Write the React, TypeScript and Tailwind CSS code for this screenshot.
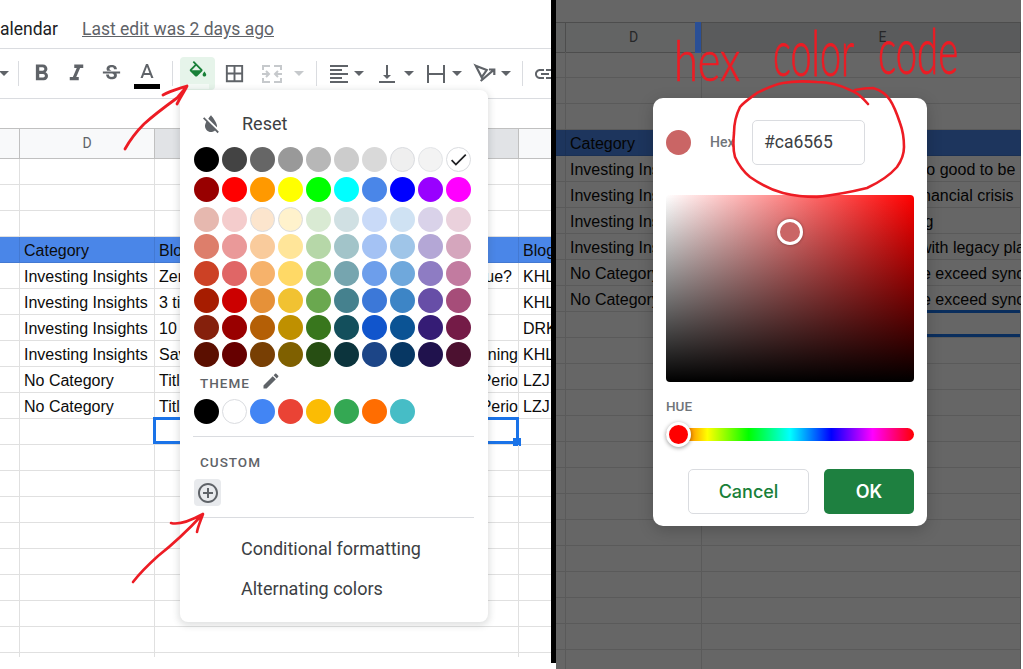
import type { ReactNode } from 'react'

const swatchRows = [
  ['bg-[#000000]', 'bg-[#434343]', 'bg-[#666666]', 'bg-[#999999]', 'bg-[#b7b7b7]', 'bg-[#cccccc]', 'bg-[#d9d9d9]', 'bg-[#efefef] border border-[#dadce0]', 'bg-[#f3f3f3] border border-[#e3e5e8]', 'bg-white border border-[#dadce0]'],
  ['bg-[#980000]', 'bg-[#ff0000]', 'bg-[#ff9900]', 'bg-[#ffff00]', 'bg-[#00ff00]', 'bg-[#00ffff]', 'bg-[#4a86e8]', 'bg-[#0000ff]', 'bg-[#9900ff]', 'bg-[#ff00ff]'],
  ['bg-[#e6b8af]', 'bg-[#f4cccc]', 'bg-[#fce5cd] border border-[#dadce0]', 'bg-[#fff2cc] border border-[#dadce0]', 'bg-[#d9ead3]', 'bg-[#d0e0e3]', 'bg-[#c9daf8]', 'bg-[#cfe2f3]', 'bg-[#d9d2e9]', 'bg-[#ead1dc]'],
  ['bg-[#dd7e6b]', 'bg-[#ea9999]', 'bg-[#f9cb9c]', 'bg-[#ffe599]', 'bg-[#b6d7a8]', 'bg-[#a2c4c9]', 'bg-[#a4c2f4]', 'bg-[#9fc5e8]', 'bg-[#b4a7d6]', 'bg-[#d5a6bd]'],
  ['bg-[#cc4125]', 'bg-[#e06666]', 'bg-[#f6b26b]', 'bg-[#ffd966]', 'bg-[#93c47d]', 'bg-[#76a5af]', 'bg-[#6d9eeb]', 'bg-[#6fa8dc]', 'bg-[#8e7cc3]', 'bg-[#c27ba0]'],
  ['bg-[#a61c00]', 'bg-[#cc0000]', 'bg-[#e69138]', 'bg-[#f1c232]', 'bg-[#6aa84f]', 'bg-[#45818e]', 'bg-[#3c78d8]', 'bg-[#3d85c6]', 'bg-[#674ea7]', 'bg-[#a64d79]'],
  ['bg-[#85200c]', 'bg-[#990000]', 'bg-[#b45f06]', 'bg-[#bf9000]', 'bg-[#38761d]', 'bg-[#134f5c]', 'bg-[#1155cc]', 'bg-[#0b5394]', 'bg-[#351c75]', 'bg-[#741b47]'],
  ['bg-[#5b0f00]', 'bg-[#660000]', 'bg-[#783f04]', 'bg-[#7f6000]', 'bg-[#274e13]', 'bg-[#0c343d]', 'bg-[#1c4587]', 'bg-[#073763]', 'bg-[#20124d]', 'bg-[#4c1130]'],
]
const rowGaps = ['mt-[12px]', 'mt-[5px]', 'mt-[5px]', 'mt-[2px]', 'mt-[2px]', 'mt-[2px]', 'mt-[2px]', 'mt-[2px]']
const themeSwatches = ['bg-[#000000]', 'bg-white border border-[#dadce0]', 'bg-[#4285f4]', 'bg-[#ea4335]', 'bg-[#fbbc04]', 'bg-[#34a853]', 'bg-[#ff6d01]', 'bg-[#46bdc6]']

const sheetRows = [
  { cat: 'Investing Insights', title: 'Zero', tail: 'ue?', tailCls: 'pr-[6px]', owner: 'KHL', rest: 'too good to be', restCls: 'pl-[211px]' },
  { cat: 'Investing Insights', title: '3 tips', tail: '', tailCls: '', owner: 'KHL', rest: 'financial crisis', restCls: 'pl-[212px]' },
  { cat: 'Investing Insights', title: '10 ways', tail: '', tailCls: '', owner: 'DRK', rest: 'ing', restCls: 'pl-[210px]' },
  { cat: 'Investing Insights', title: 'Saving', tail: 'ning', tailCls: 'pr-0', owner: 'KHL', rest: 'with legacy planning', restCls: 'pl-[218px]' },
  { cat: 'No Category', title: 'Title', tail: 'Perio', tailCls: 'pr-0', owner: 'LZJ', rest: 'e exceed synchronization', restCls: 'pl-[220px]' },
  { cat: 'No Category', title: 'Title', tail: 'Perio', tailCls: 'pr-0', owner: 'LZJ', rest: 'e exceed synchronization', restCls: 'pl-[220px]' },
]

function Icon({ d, className }: { d: string; className: string }) {
  return (
    <svg viewBox="0 0 24 24" fill="currentColor" className={className}>
      <path d={d} />
    </svg>
  )
}

function Caret({ className = 'text-[#5f6368]' }: { className?: string }) {
  return (
    <svg viewBox="0 0 10 5" fill="currentColor" className={`w-[10px] h-[5px] ${className}`}>
      <path d="M0 0h10L5 5z" />
    </svg>
  )
}

function Sep({ className }: { className: string }) {
  return <div className={`w-px h-[25px] shrink-0 bg-[#dadce0] ${className}`} />
}

function ToolBox({ className, children }: { className: string; children: ReactNode }) {
  return <div className={`flex items-center justify-center shrink-0 text-[#5f6368] ${className}`}>{children}</div>
}

function Toolbar() {
  return (
    <div className="flex items-center h-[50px] border-b border-[#dadce0] overflow-hidden">
      <div className="w-[18px] shrink-0 -ml-[1px]"><Caret /></div>
      <Sep className="ml-[1px]" />
      <ToolBox className="w-[34px] ml-[5px]">
        <Icon className="size-[27px]" d="M15.6 10.79c.97-.67 1.65-1.77 1.65-2.79 0-2.26-1.75-4-4-4H7v14h7.04c2.09 0 3.71-1.7 3.71-3.79 0-1.52-.86-2.82-2.15-3.42zM10 6.5h3c.83 0 1.5.67 1.5 1.5s-.67 1.5-1.5 1.5h-3v-3zm3.5 9H10v-3h3.5c.83 0 1.5.67 1.5 1.5s-.67 1.5-1.5 1.5z" />
      </ToolBox>
      <ToolBox className="w-[36px]">
        <Icon className="size-[27px]" d="M10 4v3h2.21l-3.42 8H6v3h8v-3h-2.21l3.42-8H18V4z" />
      </ToolBox>
      <ToolBox className="w-[35px]">
        <Icon className="size-[23px]" d="M7.24 8.75c-.26-.48-.39-1.03-.39-1.67 0-.61.13-1.16.4-1.67.26-.5.63-.93 1.11-1.29.48-.35 1.05-.63 1.7-.83.66-.19 1.39-.29 2.18-.29.81 0 1.54.11 2.21.34.66.22 1.23.54 1.69.94.47.4.83.88 1.08 1.43.25.55.38 1.15.38 1.81h-3.01c0-.31-.05-.59-.15-.85-.09-.27-.24-.49-.44-.68-.2-.19-.45-.33-.75-.44-.3-.1-.66-.16-1.06-.16-.39 0-.74.04-1.03.13-.29.09-.53.21-.72.36-.19.16-.34.34-.44.55-.1.21-.15.43-.15.66 0 .48.25.88.74 1.21.38.25.77.48 1.41.7H7.39c-.05-.08-.11-.17-.15-.25zM21 12v-2H3v2h9.62c.18.07.4.14.55.2.37.17.66.34.87.51.21.17.35.36.43.57.07.2.11.43.11.69 0 .23-.05.45-.14.66-.09.2-.23.38-.42.53-.19.15-.42.26-.71.35-.29.08-.63.13-1.01.13-.43 0-.83-.04-1.18-.13s-.66-.23-.91-.42c-.25-.19-.45-.44-.59-.75-.14-.31-.25-.76-.25-1.21H6.4c0 .55.08 1.13.24 1.58.16.45.37.85.65 1.21.28.35.6.66.98.92.37.26.78.48 1.22.65.44.17.9.3 1.38.39.48.08.96.13 1.44.13.8 0 1.53-.09 2.18-.28s1.21-.45 1.67-.79c.46-.34.82-.77 1.07-1.27s.38-1.07.38-1.71c0-.6-.1-1.14-.31-1.61-.05-.11-.11-.23-.17-.33H21z" />
      </ToolBox>
      <ToolBox className="w-[36px] flex-col mt-[3px]">
        <Icon className="size-[24px]" d="M11 3L5.5 17h2.25l1.12-3h6.25l1.12 3h2.25L13 3h-2zm-1.38 9L12 5.67 14.38 12H9.62z" />
        <div className="w-[26px] h-[5px] -mt-[1px] bg-black" />
      </ToolBox>
      <Sep className="ml-[7px]" />
      <div className="flex flex-col items-center w-[35px] h-[33px] ml-[7px] shrink-0 rounded-[4px] bg-[#e6f4ea] text-[#188038]">
        <Icon className="size-[22px] mt-[4px] shrink-0" d="M16.56 8.94L7.62 0 6.21 1.41l2.38 2.38-5.15 5.15c-.59.59-.59 1.54 0 2.12l5.5 5.5c.29.29.68.44 1.06.44s.77-.15 1.06-.44l5.5-5.5c.59-.58.59-1.53 0-2.12zM5.21 10L10 5.21 14.79 10H5.21zM19 11.5s-2 2.17-2 3.5c0 1.1.9 2 2 2s2-.9 2-2c0-1.33-2-3.5-2-3.5z" />
        <div className="w-[23px] h-[5px] mt-px bg-[#f4faf6]" />
      </div>
      <ToolBox className="w-[38px]">
        <Icon className="size-[23px]" d="M3 3v18h18V3H3zm8 16H5v-6h6v6zm0-8H5V5h6v6zm8 8h-6v-6h6v6zm0-8h-6V5h6v6z" />
      </ToolBox>
      <ToolBox className="w-[38px]">
        <svg viewBox="0 0 24 24" fill="none" stroke="#c6c9cc" strokeWidth="2" className="size-[24px]">
          <path d="M3 8V4h7M14 4h7v4M3 16v4h7M14 20h7v-4M2 12h6M6 9l3 3-3 3M22 12h-6M18 9l-3 3 3 3" />
        </svg>
      </ToolBox>
      <ToolBox className="w-[16px]"><Caret className="text-[#c6c9cc]" /></ToolBox>
      <Sep className="ml-[9px]" />
      <ToolBox className="w-[28px] ml-[8px]">
        <Icon className="size-[24px]" d="M15 15H3v2h12v-2zm0-8H3v2h12V7zM3 13h18v-2H3v2zm0 8h18v-2H3v2zM3 3v2h18V3H3z" />
      </ToolBox>
      <ToolBox className="w-[12px]"><Caret /></ToolBox>
      <ToolBox className="w-[28px] ml-[8px]">
        <Icon className="size-[24px]" d="M16 13h-3V3h-2v10H8l4 4 4-4zM4 19v2h16v-2H4z" />
      </ToolBox>
      <ToolBox className="w-[12px] ml-[2px]"><Caret /></ToolBox>
      <ToolBox className="w-[28px] ml-[7px]">
        <Icon className="size-[24px]" d="M3 3h2v18H3zM19 3h2v18h-2zM5 11h14v2H5z" />
      </ToolBox>
      <ToolBox className="w-[12px] ml-[1px]"><Caret /></ToolBox>
      <ToolBox className="w-[28px] ml-[7px]">
        <svg viewBox="0 0 28 28" fill="none" stroke="currentColor" strokeWidth="2.2" className="size-[28px]">
          <path d="M5.7 5.7L16.7 10 11.7 17.3zM10.7 21L24.3 9.3M19 9.5h5.3V15" />
        </svg>
      </ToolBox>
      <ToolBox className="w-[12px] ml-[2px]"><Caret /></ToolBox>
      <Sep className="ml-[10px]" />
      <ToolBox className="w-[28px] ml-[8px]">
        <Icon className="size-[24px]" d="M3.9 12c0-1.71 1.39-3.1 3.1-3.1h4V7H7c-2.76 0-5 2.24-5 5s2.24 5 5 5h4v-1.9H7c-1.71 0-3.1-1.39-3.1-3.1zM8 13h8v-2H8v2zm9-6h-4v1.9h4c1.71 0 3.1 1.39 3.1 3.1s-1.39 3.1-3.1 3.1h-4V17h4c2.76 0 5-2.24 5-5s-2.24-5-5-5z" />
      </ToolBox>
    </div>
  )
}

type Cols = { gutter: string; d: string; e: string; f: string }
const leftCols: Cols = { gutter: 'w-[20px]', d: 'w-[135px]', e: 'w-[364px]', f: 'flex-1' }
const rightCols: Cols = { gutter: 'w-[10px]', d: 'w-[136px]', e: 'flex-1', f: 'hidden' }

function HeaderRow({ cols, handle }: { cols: Cols; handle?: boolean }) {
  const cell = 'flex items-center justify-center shrink-0 border-r border-[#c0c0c0]'
  return (
    <div className="flex h-[31px] border-y border-[#c0c0c0] font-['Roboto',sans-serif] text-[14px] text-[#5f6368]">
      <div className={`${cols.gutter} shrink-0 border-r border-[#c0c0c0] bg-[#f8f9fa]`} />
      <div className={`${cols.d} ${cell} relative bg-[#f8f9fa]`}>
        D
        {handle && <div className="absolute right-0 -top-px -bottom-px w-[6px] z-20 bg-[#2a4f96]" />}
      </div>
      <div className={`${cols.e} ${cell} bg-[#e1e3e6] ${handle ? 'pl-[43px]' : ''}`}>{handle ? 'E' : ''}</div>
      <div className={`${cols.f} bg-[#f8f9fa]`} />
    </div>
  )
}

function GridRow({ cols, blue, d, e, f, selection }: { cols: Cols; blue?: boolean; d?: ReactNode; e?: ReactNode; f?: ReactNode; selection?: ReactNode }) {
  const tone = blue ? 'border-[#4379d2]' : 'border-[#e0e0e0]'
  return (
    <div className={`flex h-[26px] shrink-0 border-b ${tone} font-['Liberation_Sans',sans-serif] text-[16px] leading-[27px] text-[#0c0c0c] whitespace-nowrap ${blue ? 'bg-[#4a86e8]' : ''}`}>
      <div className={`${cols.gutter} shrink-0 border-r ${tone}`} />
      <div className={`${cols.d} shrink-0 pl-[4px] overflow-hidden border-r ${tone}`}>{d}</div>
      <div className={`${cols.e} relative shrink-0 border-r ${tone}`}>
        <div className="h-full overflow-hidden">{e}</div>
        {selection}
      </div>
      <div className={`${cols.f} pl-[4px] overflow-hidden`}>{f}</div>
    </div>
  )
}

function LeftSheet() {
  return (
    <div>
      <HeaderRow cols={leftCols} />
      <GridRow cols={leftCols} />
      <GridRow cols={leftCols} />
      <GridRow cols={leftCols} />
      <GridRow cols={leftCols} blue d="Category" e={<div className="pl-[4px]">Blog Title</div>} f="Blog" />
      {sheetRows.map((r, i) => (
        <GridRow
          key={i}
          cols={leftCols}
          d={r.cat}
          e={
            <div className="flex justify-between pl-[4px]">
              <span>{r.title}</span>
              <span className={r.tailCls}>{r.tail}</span>
            </div>
          }
          f={r.owner}
        />
      ))}
      <GridRow
        cols={leftCols}
        selection={
          <div className="absolute -left-[2px] -top-[2px] -right-px bottom-0 border-[3px] border-[#1a73e8]">
            <div className="absolute -right-[5px] -bottom-[5px] size-[8px] bg-[#1a73e8]" />
          </div>
        }
      />
      {Array.from({ length: 8 }, (_, i) => (
        <GridRow key={i} cols={leftCols} />
      ))}
      <div className="flex h-[4px]">
        <div className="w-[20px] border-r border-[#e0e0e0]" />
        <div className="w-[135px] border-r border-[#e0e0e0]" />
        <div className="w-[364px] border-r border-[#e0e0e0]" />
      </div>
    </div>
  )
}

function RightSheet() {
  return (
    <div className="h-full pt-[22px] flex flex-col overflow-hidden bg-white">
      <div className="-mb-px">
        <HeaderRow cols={rightCols} handle />
      </div>
      <GridRow cols={rightCols} />
      <GridRow cols={rightCols} />
      <GridRow cols={rightCols} />
      <GridRow cols={rightCols} blue d="Category" />
      {sheetRows.map((r, i) => (
        <GridRow key={i} cols={rightCols} d={r.cat} e={<div className={r.restCls}>{r.rest}</div>} />
      ))}
      <GridRow
        cols={rightCols}
        selection={<div className="absolute -left-px -top-[2px] right-0 bottom-0 border-y-[3px] border-[#1a73e8]" />}
      />
      {Array.from({ length: 13 }, (_, i) => (
        <GridRow key={i} cols={rightCols} />
      ))}
    </div>
  )
}

function Swatch({ cls, children }: { cls: string; children?: ReactNode }) {
  return <div className={`flex items-center justify-center size-[25px] shrink-0 rounded-full ${cls}`}>{children}</div>
}

function ColorMenu() {
  return (
    <div className="absolute left-[180px] top-[90px] w-[308px] h-[532px] rounded-lg bg-white shadow-[0_2px_6px_2px_rgba(60,64,67,0.15)] font-['Roboto',sans-serif] text-[#3c4043]">
      <div className="flex items-center h-[24px] mt-[21px] pt-px ml-[19px] gap-[19px] text-[18px]">
        <Icon className="size-[24px] text-[#5f6368]" d="M18 14c0-4-6-10.8-6-10.8s-1.33 1.51-2.73 3.52l8.59 8.59c.09-.42.14-.86.14-1.31zm-.88 3.12L12.5 12.5 5.27 5.27 4 6.54l3.32 3.32C6.55 11.32 6 12.79 6 14c0 3.31 2.69 6 6 6 1.52 0 2.9-.57 3.96-1.5l2.63 2.63 1.27-1.27-2.74-2.74z" />
        Reset
      </div>
      {swatchRows.map((row, i) => (
        <div key={i} className={`flex gap-[3px] pl-[14px] ${rowGaps[i]}`}>
          {row.map((cls, j) => (
            <Swatch key={j} cls={cls}>
              {i === 0 && j === 9 && (
                <Icon className="size-[21px] text-[#202124]" d="M9 16.17L4.83 12l-1.42 1.41L9 19 21 7l-1.41-1.41z" />
              )}
            </Swatch>
          ))}
        </div>
      ))}
      <div className="flex items-center h-[20px] mt-[6px] pl-[20px] gap-[11px] text-[13.5px] font-medium tracking-[1px] text-[#5f6368]">
        THEME
        <Icon className="size-[20px] -mt-[5px]" d="M3 17.25V21h3.75L17.81 9.94l-3.75-3.75L3 17.25zM20.71 7.04c.39-.39.39-1.02 0-1.41l-2.34-2.34c-.39-.39-1.02-.39-1.41 0l-1.83 1.83 3.75 3.75 1.83-1.83z" />
      </div>
      <div className="flex gap-[3px] pl-[14px] mt-[6px]">
        {themeSwatches.map((cls, i) => (
          <Swatch key={i} cls={cls} />
        ))}
      </div>
      <div className="h-px w-[281px] ml-[13px] mt-[12px] bg-[#dadce0]" />
      <div className="h-[16px] leading-[16px] mt-[17px] pl-[20px] text-[13.5px] font-medium tracking-[1px] text-[#5f6368]">CUSTOM</div>
      <div className="flex items-center justify-center size-[27px] ml-[14px] mt-[9px] rounded-[4px] bg-[#e8eaed]">
        <Icon className="size-[24px] text-[#5f6368]" d="M13 7h-2v4H7v2h4v4h2v-4h4v-2h-4V7zm-1-5C6.48 2 2 6.48 2 12s4.48 10 10 10 10-4.48 10-10S17.52 2 12 2zm0 18c-4.41 0-8-3.59-8-8s3.59-8 8-8 8 3.59 8 8-3.59 8-8 8z" />
      </div>
      <div className="h-px w-[281px] ml-[13px] mt-[11px] bg-[#dadce0]" />
      <div className="mt-[11px] pl-[61px] text-[18px] leading-[40px]">
        <div>Conditional formatting</div>
        <div>Alternating colors</div>
      </div>
    </div>
  )
}

function HexDialog() {
  return (
    <div className="absolute left-[97px] top-[98px] z-20 w-[274px] h-[428px] px-[13px] pt-[22px] rounded-[10px] bg-white shadow-[0_4px_16px_rgba(0,0,0,0.2)] font-['Roboto',sans-serif]">
      <div className="flex items-center h-[45px]">
        <div className="size-[25px] rounded-full bg-[#ca6565]" />
        <span className="w-[42px] ml-[19px] text-[14px] font-medium text-[#70757a]">Hex</span>
        <div className="flex items-center w-[113px] h-[45px] pl-[11px] rounded-[5px] border border-[#dadce0] text-[17.5px] text-[#3c4043]">#ca6565</div>
      </div>
      <div className="relative h-[187px] mt-[30px] rounded-[4px] bg-[linear-gradient(to_bottom,transparent,#000),linear-gradient(to_right,#fff,#f00)]">
        <div className="absolute left-[111px] top-[24px] size-[26px] rounded-full border-[3px] border-white bg-[#ca6565] shadow-[0_0_3px_rgba(0,0,0,0.4)]" />
      </div>
      <div className="h-[16px] leading-[16px] mt-[16px] text-[13.5px] font-medium text-[#70757a]">HUE</div>
      <div className="relative h-[13px] mt-[14px] rounded-full bg-[linear-gradient(to_right,#f00,#ff0,#0f0,#0ff,#00f,#f0f,#f00)]">
        <div className="absolute left-0 -top-[6px] size-[25px] rounded-full border-[3px] border-white bg-[#ff0000] shadow-[0_1px_4px_rgba(0,0,0,0.4)]" />
      </div>
      <div className="flex justify-end gap-[15px] h-[45px] mt-[28px] font-['Inter',sans-serif] text-[18px] font-medium">
        <div className="flex items-center justify-center w-[121px] rounded-[5px] border border-[#dadce0] text-[#188038]">Cancel</div>
        <div className="flex items-center justify-center w-[90px] rounded-[5px] bg-[#1e8040] font-semibold text-white">OK</div>
      </div>
    </div>
  )
}

function Annotations() {
  return (
    <svg viewBox="0 0 1023 669" fill="none" stroke="#ed1c24" strokeLinecap="round" strokeLinejoin="round" className="absolute inset-0 z-30 w-[1023px] h-[669px] pointer-events-none">
      <path strokeWidth="2.8" d="M125 149C130 140 136 132 144 124C155 114 166 106 177 98C181 93 184 90 187 86M163 95C170 91 178 89 187 86C184 92 180 98 177 104" />
      <path strokeWidth="2.6" d="M133 582C140 573 148 565 158 556C172 545 190 528 203 514M171 523C178 525 190 521 203 514C201 520 198 526 197 532" />
      <path strokeWidth="2.6" d="M868 104C862 97 857 92 850 90C840 85 828 82 817 82C805 81 793 81 783 83C772 85 765 89 757 93C750 98 744 102 740 107C735 117 734 125 734 133C733 143 733 150 735 157C739 166 744 172 750 177C760 184 772 190 783 193C795 196 806 197 817 197C834 195 851 192 867 188C880 182 890 175 897 167C902 160 904 153 904 147C904 138 903 131 900 123C897 114 894 106 890 100C886 94 880 90 873 88C866 88 860 89 855 90" />
    </svg>
  )
}

function Handwriting() {
  return (
    <div className="absolute inset-0 z-30 pointer-events-none font-['Lato',sans-serif] font-light text-[#ed1c24] text-[54px] leading-none [-webkit-text-stroke:0.7px_#ed1c24]">
      <span className="absolute left-[674px] top-[33px] scale-x-[0.8] scale-y-[1.05] origin-left">hex</span>
      <span className="absolute left-[773px] top-[26px] scale-x-[0.7] scale-y-[1.15] origin-left">color</span>
      <span className="absolute left-[878px] top-[24px] scale-x-[0.71] scale-y-[1.15] origin-left">code</span>
    </div>
  )
}

export default function App() {
  return (
    <div className="relative flex w-[1023px] h-[669px] bg-white overflow-hidden">
      <div className="relative w-[551px] h-full shrink-0 overflow-hidden">
        <div className="flex items-center h-[49px] pt-[11px] border-b border-[#dadce0] font-['Roboto',sans-serif] text-[17.5px] whitespace-nowrap">
          <span className="w-[82px] shrink-0 text-[#202124]">alendar</span>
          <span className="underline text-[#5f6368]">Last edit was 2 days ago</span>
        </div>
        <Toolbar />
        <div className="h-[29px]" />
        <LeftSheet />
        <ColorMenu />
      </div>
      <div className="w-[5px] h-[663px] shrink-0 bg-black" />
      <div className="relative w-[465px] h-full shrink-0 overflow-hidden">
        <RightSheet />
        <div className="absolute inset-0 z-10 bg-black/60" />
        <HexDialog />
      </div>
      <Annotations />
      <Handwriting />
    </div>
  )
}
